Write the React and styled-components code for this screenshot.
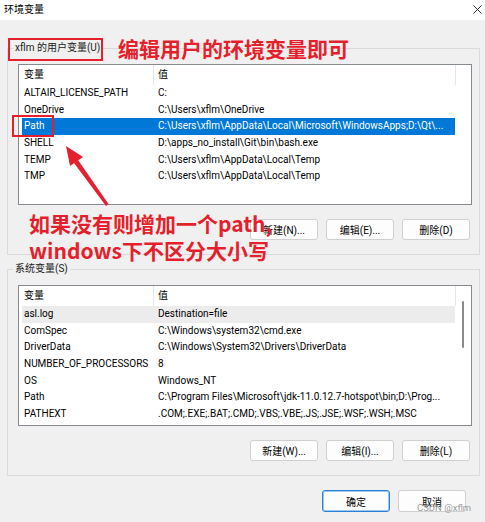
import React from 'react';
import styled, { createGlobalStyle } from 'styled-components';

const GlobalStyle = createGlobalStyle`
  html, body {
    margin: 0;
    padding: 0;
    background: #f0f0f0;
  }
  * {
    box-sizing: border-box;
  }
`;

const Window = styled.div`
  position: relative;
  width: 485px;
  height: 522px;
  overflow: hidden;
  background: #f0f0f0;
  font-family: Roboto, 'Noto Sans CJK SC', sans-serif;
  font-size: 10px;
  color: #000;
`;

const TitleBar = styled.div`
  height: 20px;
  background: #fff;
  display: flex;
  align-items: center;
  justify-content: space-between;
  padding: 0 3px 0 4px;
`;

const TitleText = styled.span`
  font-size: 10px;
  line-height: 20px;
`;

const CloseIcon = styled.svg`
  width: 9px;
  height: 9px;
  margin-top: -1px;
`;

const Body = styled.div`
  padding: 21px 6px 0 7px;
`;

const GroupBox = styled.fieldset`
  margin: 0 0 7px 0;
  padding: 9px 7px 14px 10px;
  border: 1px solid #dadada;
  border-radius: 0;
  min-inline-size: 0;
  width: 473px;
`;

const Legend = styled.legend`
  font-size: 10px;
  line-height: 14px;
  height: 14px;
  padding: 0 2px;
  margin-left: -5px;
  color: #1a1a1a;
`;

const List = styled.div`
  width: 454px;
  height: 141px;
  background: #fff;
  border: 1px solid #868a91;
  position: relative;
  overflow: hidden;
`;

const HeaderRow = styled.div`
  display: flex;
  height: 20px;
  padding-left: 3px;
`;

const HeaderCell = styled.div`
  width: ${p => p.$w}px;
  padding-left: ${p => p.$pad}px;
  line-height: 20px;
  border-right: 1px solid #e5e5e5;
  white-space: nowrap;
`;

const Row = styled.div`
  display: flex;
  width: 433px;
  height: 16.7px;
  margin-left: 3px;
  line-height: 16.7px;
  background: ${p => (p.$selected ? '#0078d7' : p.$hover ? '#ececec' : 'transparent')};
  color: ${p => (p.$selected ? '#fff' : '#000')};
`;

const NameCell = styled.div`
  width: 132px;
  padding-left: 2px;
  white-space: nowrap;
  overflow: visible;
`;

const ValueCell = styled.div`
  flex: 1;
  padding-left: 4px;
  white-space: nowrap;
  overflow: hidden;
`;

const ScrollThumb = styled.div`
  position: absolute;
  right: 7px;
  top: 15px;
  width: 2px;
  height: 47px;
  border-radius: 1px;
  background: #8a8a8a;
`;

const ButtonRow = styled.div`
  display: flex;
  justify-content: flex-end;
  gap: ${p => p.$gap || 8}px;
  margin-top: ${p => p.$top || 14}px;
  padding-right: ${p => p.$right || 2}px;
`;

const Button = styled.button`
  width: 68px;
  height: ${p => p.$h || 21}px;
  padding: 0;
  background: #fdfdfd;
  border: 1px solid ${p => (p.$primary ? '#2a7fd6' : '#d0d0d0')};
  box-shadow: ${p => (p.$primary ? 'inset 0 0 0 1px #9cc7f0' : 'none')};
  border-radius: 3px;
  font-family: Roboto, 'Noto Sans CJK SC', sans-serif;
  font-size: 10px;
  color: #000;
`;

const Annotation = styled.div`
  position: absolute;
  left: ${p => p.$x}px;
  top: ${p => p.$y}px;
  color: #e51f2b;
  font-family: 'Noto Sans CJK SC', sans-serif;
  font-weight: 700;
  font-size: 21px;
  line-height: 27px;
  white-space: nowrap;
`;

const RedBox = styled.div`
  position: absolute;
  left: ${p => p.$x}px;
  top: ${p => p.$y}px;
  width: ${p => p.$w}px;
  height: ${p => p.$h}px;
  border: 2px solid #e51f2b;
`;

const ArrowSvg = styled.svg`
  position: absolute;
  left: 0;
  top: 0;
  width: 485px;
  height: 522px;
  pointer-events: none;
`;

const Watermark = styled.div`
  position: absolute;
  left: 417px;
  top: 502px;
  font-family: Roboto, sans-serif;
  font-size: 9.5px;
  line-height: 12px;
  color: rgba(120, 120, 120, 0.75);
`;

const userVars = [
  ['ALTAIR_LICENSE_PATH', 'C:'],
  ['OneDrive', 'C:\\Users\\xflm\\OneDrive'],
  ['Path', 'C:\\Users\\xflm\\AppData\\Local\\Microsoft\\WindowsApps;D:\\Qt\\...', 'selected'],
  ['SHELL', 'D:\\apps_no_install\\Git\\bin\\bash.exe'],
  ['TEMP', 'C:\\Users\\xflm\\AppData\\Local\\Temp'],
  ['TMP', 'C:\\Users\\xflm\\AppData\\Local\\Temp'],
];

const systemVars = [
  ['asl.log', 'Destination=file', 'hover'],
  ['ComSpec', 'C:\\Windows\\system32\\cmd.exe'],
  ['DriverData', 'C:\\Windows\\System32\\Drivers\\DriverData'],
  ['NUMBER_OF_PROCESSORS', '8'],
  ['OS', 'Windows_NT'],
  ['Path', 'C:\\Program Files\\Microsoft\\jdk-11.0.12.7-hotspot\\bin;D:\\Prog...'],
  ['PATHEXT', '.COM;.EXE;.BAT;.CMD;.VBS;.VBE;.JS;.JSE;.WSF;.WSH;.MSC'],
];

const VarList = ({ rows, scroll }) => (
  <List>
    <HeaderRow>
      <HeaderCell $w={132} $pad={2}>变量</HeaderCell>
      <HeaderCell $w={302} $pad={4}>值</HeaderCell>
    </HeaderRow>
    {rows.map(([name, value, state]) => (
      <Row key={name + value} $selected={state === 'selected'} $hover={state === 'hover'}>
        <NameCell>{name}</NameCell>
        <ValueCell>{value}</ValueCell>
      </Row>
    ))}
    {scroll && <ScrollThumb />}
  </List>
);

const App = () => (
  <Window>
    <GlobalStyle />
    <TitleBar>
      <TitleText>环境变量</TitleText>
      <CloseIcon viewBox="0 0 9 9">
        <path d="M0.5 0.5 L8.5 8.5 M8.5 0.5 L0.5 8.5" stroke="#333" strokeWidth="1" fill="none" />
      </CloseIcon>
    </TitleBar>

    <Body>
      <GroupBox>
        <Legend>xflm 的用户变量(U)</Legend>
        <VarList rows={userVars} />
        <ButtonRow>
          <Button>新建(N)...</Button>
          <Button>编辑(E)...</Button>
          <Button>删除(D)</Button>
        </ButtonRow>
      </GroupBox>

      <GroupBox>
        <Legend>系统变量(S)</Legend>
        <VarList rows={systemVars} scroll />
        <ButtonRow>
          <Button>新建(W)...</Button>
          <Button>编辑(I)...</Button>
          <Button>删除(L)</Button>
        </ButtonRow>
      </GroupBox>

      <ButtonRow $top={14} $right={13}>
        <Button $primary $h={22}>确定</Button>
        <Button $h={22}>取消</Button>
      </ButtonRow>
    </Body>

    {/* annotations drawn over the dialog */}
    <RedBox $x={8} $y={38} $w={95} $h={23} />
    <RedBox $x={12} $y={115} $w={42} $h={22} />
    <Annotation $x={118} $y={35}>编辑用户的环境变量即可</Annotation>
    <Annotation $x={29} $y={210}>
      如果没有则增加一个path,
      <br />
      windows下不区分大小写
    </Annotation>
    <ArrowSvg viewBox="0 0 485 522">
      <polygon points="106,206 108.5,204 78,160 74,163" fill="#e51f2b" />
      <polygon points="66,146 83,157 70,166" fill="#e51f2b" />
    </ArrowSvg>
    <Watermark>CSDN @xflm</Watermark>
  </Window>
);

export default App;
